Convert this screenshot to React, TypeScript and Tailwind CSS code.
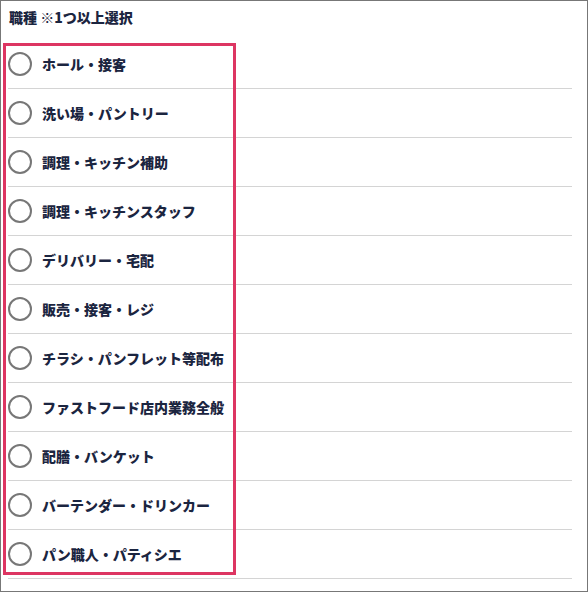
import React from 'react';

const jobs = [
  'ホール・接客',
  '洗い場・パントリー',
  '調理・キッチン補助',
  '調理・キッチンスタッフ',
  'デリバリー・宅配',
  '販売・接客・レジ',
  'チラシ・パンフレット等配布',
  'ファストフード店内業務全般',
  '配膳・バンケット',
  'バーテンダー・ドリンカー',
  'パン職人・パティシエ',
];

const App: React.FC = () => {
  return (
    <div
      className="relative w-[588px] h-[592px] bg-white border border-[#777] overflow-hidden"
      style={{ fontFamily: '"Noto Sans CJK JP", "Noto Sans", sans-serif' }}
    >
      <div className="pl-2 pt-[6px] h-[39px] text-[14px] leading-[20px] font-black text-[#1b2540]">
        職種 ※1つ以上選択
      </div>

      <ul className="ml-[7px] w-[564px]">
        {jobs.map((job) => (
          <li key={job} className="h-[49px] flex items-center gap-[10px] border-b border-[#d4d4d4]">
            <span className="w-6 h-6 shrink-0 rounded-full border-2 border-[#777] bg-white" />
            <span className="text-[14px] font-black text-[#1b2540]">{job}</span>
          </li>
        ))}
      </ul>

      {/* highlight annotation */}
      <div className="absolute left-[2px] top-[42px] w-[233px] h-[532px] border-[3px] border-[#dd3562] pointer-events-none" />
    </div>
  );
};

export default App;
